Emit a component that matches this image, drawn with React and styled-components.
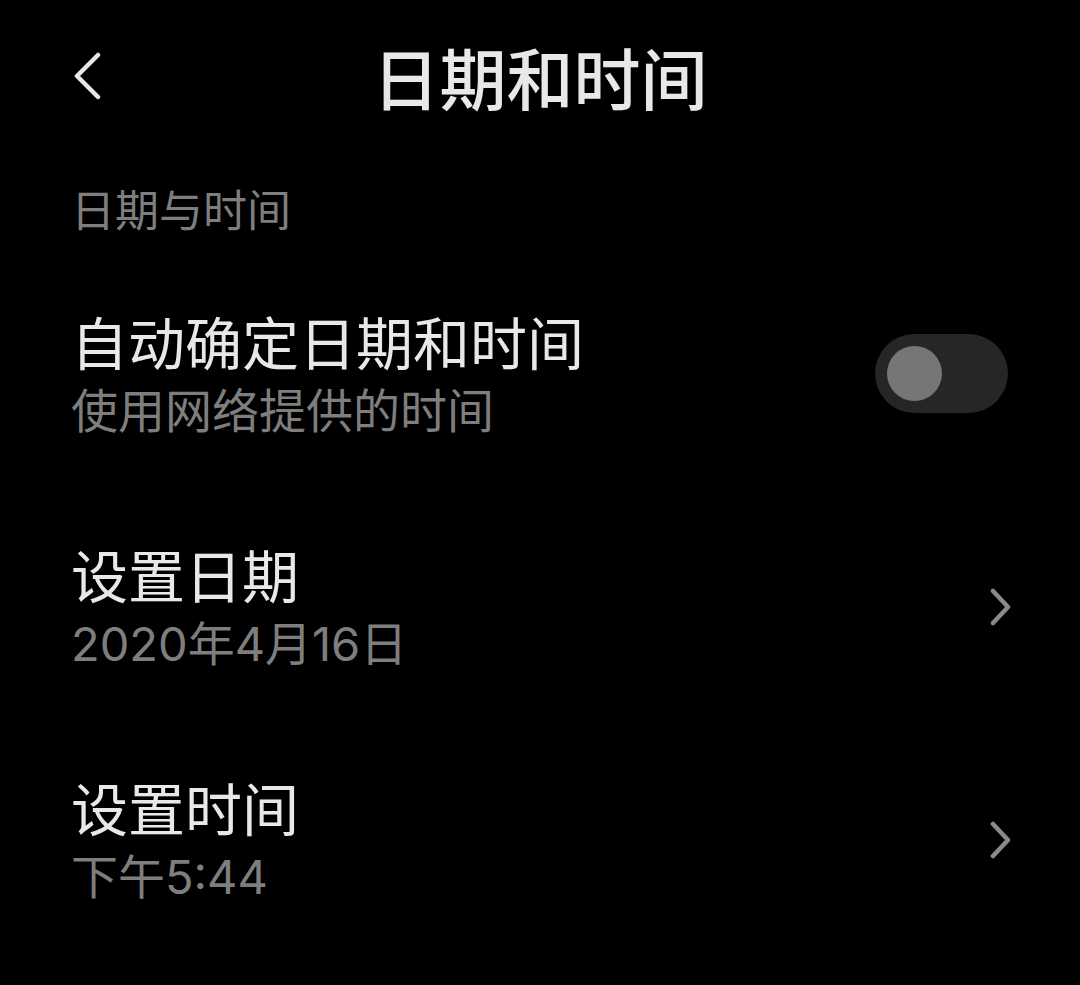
import React from 'react'
import styled, { createGlobalStyle } from 'styled-components'

const GlobalStyle = createGlobalStyle`
    html, body {
        margin: 0;
        padding: 0;
        background-color: #000;
    }
    body {
        font-family: "Noto Sans CJK SC", "Noto Sans", sans-serif;
        -webkit-font-smoothing: antialiased;
    }
`

const Screen = styled.div`
    width: 1080px;
    min-height: 985px;
    background-color: #000;
    color: #e8e8e8;
`

const Header = styled.header`
    display: grid;
    grid-template-columns: 1fr auto 1fr;
    align-items: center;
    height: 150px;
    padding: 0 73px;
`

const BackButton = styled.button`
    justify-self: start;
    display: flex;
    align-items: center;
    background: none;
    border: none;
    padding: 0;
    margin-top: 2px;
    cursor: pointer;
    color: #e8e8e8;
`

const Title = styled.h1`
    margin: 0;
    font-size: 67px;
    line-height: 1;
    font-weight: 500;
    color: #e8e8e8;
`

const SectionLabel = styled.div`
    padding: 36px 0 0 71px;
    font-size: 44px;
    line-height: 1;
    color: #7e7e7e;
    margin-bottom: 27px;
`

const Row = styled.div`
    display: flex;
    align-items: center;
    justify-content: space-between;
    height: 233px;
    padding: 0 ${p => p.$padRight}px 0 71px;
    cursor: pointer;
`

const TextBlock = styled.div`
    display: flex;
    flex-direction: column;
    margin-top: -2px;
`

const RowTitle = styled.div`
    font-size: 57px;
    line-height: 66px;
    color: #e8e8e8;
`

const RowSub = styled.div`
    margin-top: 11px;
    font-family: Inter, "Noto Sans CJK SC", sans-serif;
    font-size: 47px;
    line-height: 54px;
    color: #7e7e7e;
`

const Toggle = styled.div`
    display: flex;
    align-items: center;
    width: 133px;
    height: 79px;
    padding: 0 12px;
    box-sizing: border-box;
    border-radius: 40px;
    background-color: #262626;
`

const Knob = styled.div`
    width: 55px;
    height: 55px;
    border-radius: 50%;
    background-color: #767676;
`

const Chevron = styled.svg`
    display: block;
`

function BackIcon() {
  return (
    <svg width="30" height="48" viewBox="0 0 30 48" fill="none">
      <polyline points="25,3 4,24 25,45" stroke="#e8e8e8" strokeWidth="4.5"
        strokeLinecap="round" strokeLinejoin="round" />
    </svg>
  )
}

function NextIcon() {
  return (
    <Chevron width="22" height="38" viewBox="0 0 22 38" fill="none">
      <polyline points="3,3 18,19 3,35" stroke="#8a8a8a" strokeWidth="4.5"
        strokeLinecap="round" strokeLinejoin="round" />
    </Chevron>
  )
}

const items = [
  { title: '设置日期', sub: '2020年4月16日' },
  { title: '设置时间', sub: '下午5:44' },
]

export default function App() {
  return (
    <Screen>
      <GlobalStyle />
      <Header>
        <BackButton aria-label="返回">
          <BackIcon />
        </BackButton>
        <Title>日期和时间</Title>
        <span />
      </Header>

      <SectionLabel>日期与时间</SectionLabel>

      <Row $padRight={72}>
        <TextBlock>
          <RowTitle>自动确定日期和时间</RowTitle>
          <RowSub>使用网络提供的时间</RowSub>
        </TextBlock>
        <Toggle>
          <Knob />
        </Toggle>
      </Row>

      {items.map(item => (
        <Row key={item.title} $padRight={68}>
          <TextBlock>
            <RowTitle>{item.title}</RowTitle>
            <RowSub>{item.sub}</RowSub>
          </TextBlock>
          <NextIcon />
        </Row>
      ))}
    </Screen>
  )
}
